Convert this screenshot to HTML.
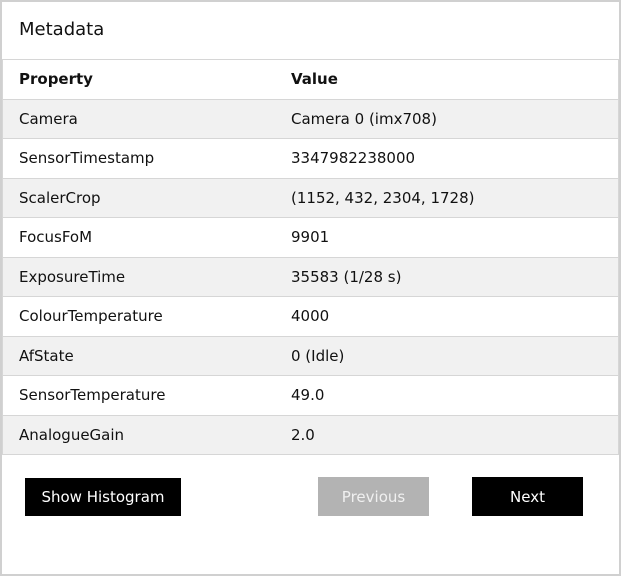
<!DOCTYPE html>
<html><head><style>
body{margin:0;width:621px;height:576px;background:#fff;font-family:"DejaVu Sans","Liberation Sans",sans-serif;overflow:hidden}
.wrap{position:absolute;left:0;top:0;width:617px;height:572px;border:2px solid #d0d0d0}
h1{position:absolute;left:17px;top:17px;margin:0;font-size:18px;font-weight:normal;color:#111}
table{position:absolute;left:0;top:57px;width:617px;border-collapse:collapse;font-size:15px;line-height:17px;color:#111;border-left:1px solid #d6d6d6;border-right:1px solid #d6d6d6}
td,th{height:37.5px;padding:1px 0 0 16px;text-align:left;border-top:1px solid #d6d6d6;border-bottom:1px solid #d6d6d6}
th{font-weight:bold}
td:first-child,th:first-child{width:256px}
tr:nth-child(even) td{background:#f1f1f1}
.b{position:absolute;color:#fff;font-size:15px;display:flex;align-items:center;justify-content:center;background:#000}
</style></head><body>
<div class="wrap">
<h1>Metadata</h1>
<table>
<tr><th>Property</th><th>Value</th></tr>
<tr><td>Camera</td><td>Camera 0 (imx708)</td></tr>
<tr><td>SensorTimestamp</td><td>3347982238000</td></tr>
<tr><td>ScalerCrop</td><td>(1152, 432, 2304, 1728)</td></tr>
<tr><td>FocusFoM</td><td>9901</td></tr>
<tr><td>ExposureTime</td><td>35583 (1/28 s)</td></tr>
<tr><td>ColourTemperature</td><td>4000</td></tr>
<tr><td>AfState</td><td>0 (Idle)</td></tr>
<tr><td>SensorTemperature</td><td>49.0</td></tr>
<tr><td>AnalogueGain</td><td>2.0</td></tr>
</table>
</div>
<div class="b" style="left:25px;top:478px;width:156px;height:38px">Show Histogram</div>
<div class="b" style="left:318px;top:477px;width:111px;height:39px;background:#b3b3b3;color:#f0f0f0">Previous</div>
<div class="b" style="left:472px;top:477px;width:111px;height:39px">Next</div>
</body></html>
